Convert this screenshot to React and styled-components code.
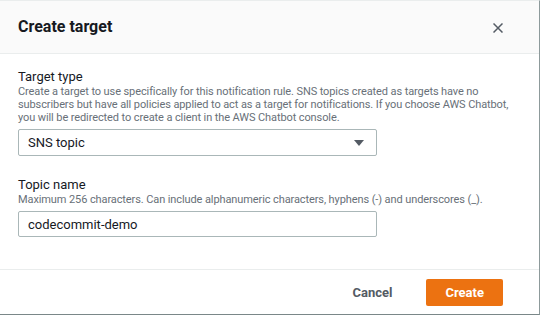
import React from 'react'
import styled, { createGlobalStyle } from 'styled-components'

const Global = createGlobalStyle`
  html, body {
    margin: 0;
    padding: 0;
    background: #ffffff;
  }
  body {
    font-family: Roboto, "Liberation Sans", Arial, sans-serif;
    color: #16191f;
  }
`

function App() {
  return (
    <>
      <Global />
      <Modal>
        <Header>
          <Title>Create target</Title>
          <Close aria-label="Close">
            <svg width="10" height="10" viewBox="0 0 10 10">
              <path d="M0.5 0.5 L9.5 9.5 M9.5 0.5 L0.5 9.5" stroke="#545b64" strokeWidth="1.5" fill="none" />
            </svg>
          </Close>
        </Header>
        <Body>
          <Field>
            <Label>Target type</Label>
            <Hint>
              Create a target to use specifically for this notification rule. SNS topics created as targets have no
              subscribers but have all policies applied to act as a target for notifications. If you choose AWS Chatbot,
              you will be redirected to create a client in the AWS Chatbot console.
            </Hint>
            <Select>
              <span>SNS topic</span>
              <Caret />
            </Select>
          </Field>
          <Field>
            <Label>Topic name</Label>
            <Hint>Maximum 256 characters. Can include alphanumeric characters, hyphens (-) and underscores (_).</Hint>
            <Input>codecommit-demo</Input>
          </Field>
        </Body>
        <Footer>
          <Button>Cancel</Button>
          <Button primary>Create</Button>
        </Footer>
      </Modal>
    </>
  )
}

export default App

const Modal = styled.div`
  width: 540px;
  height: 315px;
  background: #ffffff;
  border-right: 1px solid #8d9a9b;
  border-bottom: 1px solid #7a8788;
  border-top: 1px solid #eaeded;
  box-sizing: border-box;
  display: flex;
  flex-direction: column;
`

const Header = styled.div`
  height: 53px;
  box-sizing: border-box;
  background: #fafafa;
  border-bottom: 1px solid #eaeded;
  display: flex;
  align-items: center;
  justify-content: space-between;
  padding: 0 36px 0 18px;
`

const Title = styled.h2`
  margin: 0;
  font-size: 16px;
  font-weight: 700;
  color: #16191f;
  padding-bottom: 1px;
`

const Close = styled.div`
  display: flex;
  align-items: center;
  padding-top: 1px;
`

const Body = styled.div`
  flex: 1;
  padding: 15px 16px 0 18px;
  display: flex;
  flex-direction: column;
  gap: 21px;
  border-bottom: 1px solid #eaeded;
`

const Field = styled.div`
  display: flex;
  flex-direction: column;
`

const Label = styled.div`
  font-size: 13px;
  line-height: 16px;
  color: #16191f;
`

const Hint = styled.div`
  font-size: 11px;
  line-height: 13px;
  letter-spacing: -0.1px;
  color: #687078;
  margin-bottom: 5px;
`

const Select = styled.div`
  width: 359px;
  height: 27px;
  box-sizing: border-box;
  border: 1px solid #aab7b8;
  border-radius: 2px;
  display: flex;
  align-items: center;
  justify-content: space-between;
  padding: 0 12px 0 9px;
  font-size: 13px;
  color: #16191f;
`

const Caret = styled.span`
  width: 0;
  height: 0;
  border-left: 5px solid transparent;
  border-right: 5px solid transparent;
  border-top: 6px solid #545b64;
`

const Input = styled(Select)`
  height: 26px;
`

const Footer = styled.div`
  height: 44px;
  display: flex;
  align-items: center;
  justify-content: flex-end;
  gap: 12px;
  padding: 0 36px 0 0;
`

const Button = styled.div`
  height: 27px;
  box-sizing: border-box;
  display: flex;
  align-items: center;
  justify-content: center;
  font-size: 13px;
  font-weight: 700;
  border-radius: 2px;
  padding: 0 ${p => (p.primary ? '19px' : '22px')};
  min-width: ${p => (p.primary ? '75px' : 'auto')};
  background: ${p => (p.primary ? '#ec7211' : 'transparent')};
  color: ${p => (p.primary ? '#ffffff' : '#545b64')};
`
